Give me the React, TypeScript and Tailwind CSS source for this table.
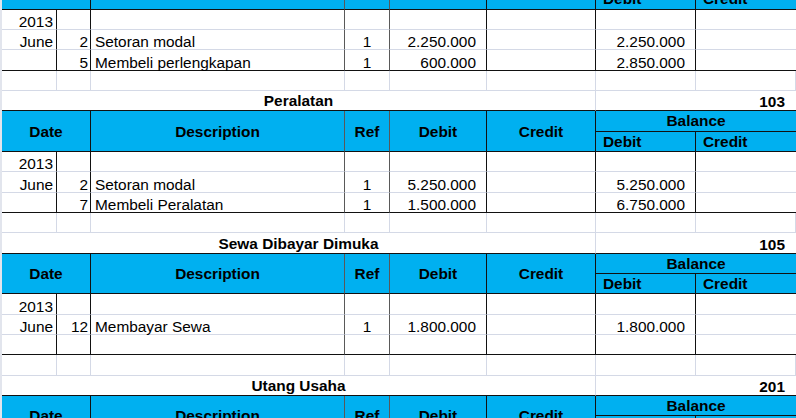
const COLS = "grid grid-cols-[55px_34px_254px_45px_97px_109px_100px_100px] border-l-2 border-l-[#e2e5ed]"
const ROW = "h-[20.34px]"

type Entry = string[]

function Header() {
  return (
    <div className={`${COLS} grid-rows-[20.34px_20.34px] bg-[#00b0f0] font-bold text-black`}>
      <div className="col-span-2 row-span-2 flex items-center justify-center border-r border-r-[#111] border-b border-b-[#111]">Date</div>
      <div className="row-span-2 flex items-center justify-center border-r border-r-[#595959] border-b border-b-[#111]">Description</div>
      <div className="row-span-2 flex items-center justify-center border-r border-r-[#595959] border-b border-b-[#111]">Ref</div>
      <div className="row-span-2 flex items-center justify-center border-r border-r-[#111] border-b border-b-[#111]">Debit</div>
      <div className="row-span-2 flex items-center justify-center border-r border-r-[#111] border-b border-b-[#111]">Credit</div>
      <div className="col-span-2 flex items-center justify-center border-b border-b-[#111]">Balance</div>
      <div className="flex items-center pl-[7px] border-r border-r-[#111] border-b border-b-[#111]">Debit</div>
      <div className="flex items-center pl-[7px] border-b border-b-[#111]">Credit</div>
    </div>
  )
}

function DataRow({ cells, last }: { cells: Entry; last: boolean }) {
  const bottom = last ? "border-b border-b-[#111]" : "border-b border-b-[#d4d9e6]"
  const cell = `flex items-end leading-[14px] ${ROW} ${bottom}`
  return (
    <div className={COLS}>
      <div className={`${cell} justify-end pr-[3px] border-r border-r-[#111]`}>{cells[0]}</div>
      <div className={`${cell} justify-end pr-[2px] border-r border-r-[#111]`}>{cells[1]}</div>
      <div className={`${cell} pl-[4px] border-r border-r-[#595959]`}>{cells[2]}</div>
      <div className={`${cell} justify-center border-r border-r-[#595959]`}>{cells[3]}</div>
      <div className={`${cell} justify-end pr-[10px] border-r border-r-[#111]`}>{cells[4]}</div>
      <div className={`${cell} justify-end pr-[10px] border-r border-r-[#111]`}>{cells[5]}</div>
      <div className={`${cell} justify-end pr-[10px] border-r border-r-[#111]`}>{cells[6]}</div>
      <div className={`${cell} justify-end pr-[10px]`}>{cells[7]}</div>
    </div>
  )
}

function EmptyRow() {
  const cell = `${ROW} border-b border-b-[#d4d9e6] border-r border-r-[#d4d9e6]`
  return (
    <div className={COLS}>
      {Array.from({ length: 8 }).map((_, i) => (
        <div key={i} className={cell} />
      ))}
    </div>
  )
}

function TitleRow({ title, no }: { title: string; no: string }) {
  return (
    <div className={`${COLS} font-bold`}>
      <div className={`col-span-6 flex items-end justify-center leading-[14px] pb-[2px] ${ROW} border-r border-r-[#d4d9e6] border-b border-b-[#111]`}>
        {title}
      </div>
      <div className={`col-span-2 flex items-end justify-end leading-[14px] pb-[1px] pr-[11px] ${ROW} border-b border-b-[#111]`}>
        {no}
      </div>
    </div>
  )
}

function Ledger({ title, no, rows }: { title?: string; no?: string; rows: Entry[] }) {
  return (
    <div>
      {title && <TitleRow title={title} no={no ?? ""} />}
      <Header />
      {rows.map((r, i) => (
        <DataRow key={i} cells={r} last={i === rows.length - 1} />
      ))}
      {rows.length > 0 && <EmptyRow />}
    </div>
  )
}

export default function App() {
  return (
    <div className="w-[796px] h-[418px] overflow-hidden bg-white text-black text-[15.4px] font-['Liberation_Sans',Arial,sans-serif]">
      <div className="-mt-[31px]">
        <Ledger
          rows={[
            ["2013", "", "", "", "", "", "", ""],
            ["June", "2", "Setoran modal", "1", "2.250.000", "", "2.250.000", ""],
            ["", "5", "Membeli perlengkapan", "1", "600.000", "", "2.850.000", ""],
          ]}
        />
        <Ledger
          title="Peralatan"
          no="103"
          rows={[
            ["2013", "", "", "", "", "", "", ""],
            ["June", "2", "Setoran modal", "1", "5.250.000", "", "5.250.000", ""],
            ["", "7", "Membeli Peralatan", "1", "1.500.000", "", "6.750.000", ""],
          ]}
        />
        <Ledger
          title="Sewa Dibayar Dimuka"
          no="105"
          rows={[
            ["2013", "", "", "", "", "", "", ""],
            ["June", "12", "Membayar Sewa", "1", "1.800.000", "", "1.800.000", ""],
            ["", "", "", "", "", "", "", ""],
          ]}
        />
        <Ledger title="Utang Usaha" no="201" rows={[]} />
      </div>
    </div>
  )
}
